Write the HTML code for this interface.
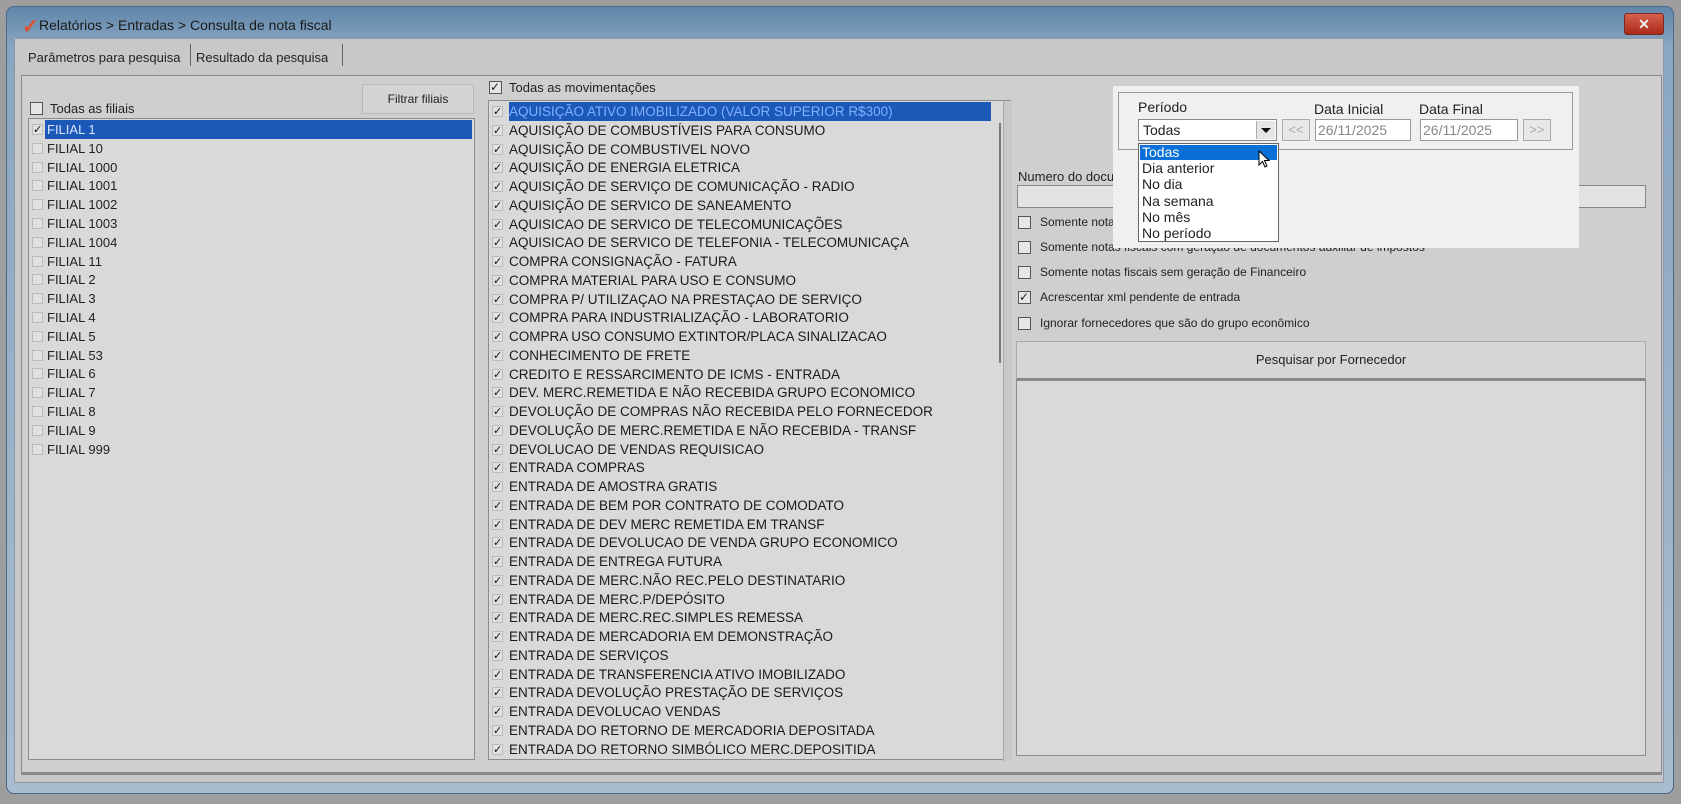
<!DOCTYPE html>
<html><head><meta charset="utf-8"><style>
*{box-sizing:border-box;margin:0;padding:0}
body{width:1681px;height:804px;background:#9e9e9e;position:relative;overflow:hidden;font-family:"Liberation Sans",sans-serif;color:#222}
.a{position:absolute}
.win{left:6px;top:6px;width:1668px;height:788px;background:linear-gradient(#5f86aa,#8aa6c2 40px,#a9bccf);border-radius:8px;border:1px solid #4a6a86}
.body{left:14px;top:38px;width:1650px;height:745px;background:#c8c8c8;border:1px solid #8a9aa8}
.t{font-size:13px;white-space:nowrap}
.cb{width:13px;height:13px;border:1px solid #555;background:#e6e6e6}
.list{background:#d9d9d9;border:1px solid #8c8c8c}
.row{position:absolute;left:0;height:19px;font-size:13px;line-height:19px;white-space:nowrap}
.ck{position:absolute;left:3px;top:4px;width:11px;height:11px;font-size:11px;line-height:10px;color:#111;border:1px solid #bbb;background:#e0e0e0;text-align:center}
</style></head><body>
<div class="a win"></div>
<div class="a" style="left:22px;top:14px;font-size:20px;color:#e0502a;font-weight:bold">✓</div>
<div class="a t" style="left:39px;top:17px;font-size:14px;color:#1a1a1a">Relatórios &gt; Entradas &gt; Consulta de nota fiscal</div>
<div class="a" style="left:1624px;top:13px;width:40px;height:22px;background:linear-gradient(#d8604e,#a92a1a);border:1px solid #7a2a20;border-radius:3px;color:#eee;text-align:center;font-size:14px;line-height:20px;font-weight:bold">✕</div>
<div class="a body"></div>
<div class="a t" style="left:28px;top:50px">Parâmetros para pesquisa</div>
<div class="a" style="left:190px;top:44px;width:1px;height:22px;background:#666"></div>
<div class="a t" style="left:196px;top:50px">Resultado da pesquisa</div>
<div class="a" style="left:342px;top:44px;width:1px;height:22px;background:#666"></div>
<div class="a" style="left:21px;top:75px;width:1641px;height:700px;background:#cfcfcf;border:1px solid #8a8a8a;border-bottom:3px solid #888"></div>

<div class="a" style="left:362px;top:84px;width:112px;height:30px;background:#d4d4d4;border:1px solid #bbb;font-size:12px;text-align:center;line-height:28px">Filtrar filiais</div>
<div class="a cb" style="left:30px;top:102px"></div>
<div class="a t" style="left:50px;top:101px">Todas as filiais</div>
<div class="a list" style="left:28px;top:118px;width:447px;height:642px">
<div class="a" style="left:16px;top:1px;width:427px;height:19px;background:#1c58b8"></div>
<div id="fl"></div>
</div>

<div class="a cb" style="left:489px;top:81px"><span style="position:absolute;left:0;top:-2px;font-size:12px">✓</span></div>
<div class="a t" style="left:509px;top:80px">Todas as movimentações</div>
<div class="a list" style="left:488px;top:100px;width:523px;height:660px;border-right:none">
<div class="a" style="left:20px;top:1px;width:482px;height:19px;background:#1c58b8"></div>
<div class="a" style="left:510px;top:22px;width:2px;height:240px;background:#777"></div>
<div class="a" style="left:514px;top:0;width:9px;height:660px;background:#c8c8c8;border-left:1px solid #aaa"></div>
<div id="ml"></div>
</div>

<div class="a t" style="left:1018px;top:169px">Numero do documento</div>
<div class="a" style="left:1017px;top:185px;width:629px;height:23px;background:#e2e2e2;border:1px solid #888"></div>
<div id="cbs"></div>
<div class="a" style="left:1016px;top:341px;width:630px;height:39px;background:#d6d6d6;border:1px solid #aaa;border-bottom:2px solid #888;font-size:13px;text-align:center;line-height:36px">Pesquisar por Fornecedor</div>
<div class="a" style="left:1016px;top:380px;width:630px;height:376px;background:#d9d9d9;border:1px solid #8c8c8c"></div>

<div class="a" style="left:1113px;top:86px;width:466px;height:162px;background:#f0f0f0"></div>
<div class="a" style="left:1118px;top:92px;width:455px;height:58px;border:1px solid #999"></div>
<div class="a t" style="left:1138px;top:99px;font-size:14px">Período</div>
<div class="a" style="left:1138px;top:119px;width:139px;height:22px;background:#fff;border:1px solid #888"></div>
<div class="a t" style="left:1143px;top:122px;font-size:14px">Todas</div>
<div class="a" style="left:1256px;top:121px;width:19px;height:18px;background:#e6e6e6;border-left:1px solid #aaa"></div>
<div class="a" style="left:1261px;top:128px;width:0;height:0;border-left:5px solid transparent;border-right:5px solid transparent;border-top:5px solid #111"></div>
<div class="a" style="left:1282px;top:119px;width:28px;height:22px;background:#e8e8e8;border:1px solid #aaa;color:#aaa;font-size:13px;text-align:center;line-height:20px">&lt;&lt;</div>
<div class="a t" style="left:1314px;top:101px;font-size:14px">Data Inicial</div>
<div class="a" style="left:1315px;top:119px;width:96px;height:22px;background:#fff;border:1px solid #999;color:#888;font-size:14px;padding:2px 2px">26/11/2025</div>
<div class="a t" style="left:1419px;top:101px;font-size:14px">Data Final</div>
<div class="a" style="left:1420px;top:119px;width:98px;height:22px;background:#fff;border:1px solid #999;color:#888;font-size:14px;padding:2px 2px">26/11/2025</div>
<div class="a" style="left:1523px;top:119px;width:28px;height:22px;background:#e8e8e8;border:1px solid #aaa;color:#aaa;font-size:13px;text-align:center;line-height:20px">&gt;&gt;</div>
<div class="a" style="left:1138px;top:143px;width:141px;height:99px;background:#fff;border:1px solid #666"></div>
<div class="a" style="left:1140px;top:145px;width:137px;height:15px;background:#0a6fd6"></div>
<div id="dd"></div>
<svg class="a" style="left:1258px;top:150px" width="14" height="20" viewBox="0 0 14 20"><path d="M1 1 L1 15 L4.5 11.5 L7 17 L9 16 L6.5 10.5 L11 10.5 Z" fill="#fff" stroke="#000" stroke-width="1"/></svg>

<script>
var f=["FILIAL 1","FILIAL 10","FILIAL 1000","FILIAL 1001","FILIAL 1002","FILIAL 1003","FILIAL 1004","FILIAL 11","FILIAL 2","FILIAL 3","FILIAL 4","FILIAL 5","FILIAL 53","FILIAL 6","FILIAL 7","FILIAL 8","FILIAL 9","FILIAL 999"];
var h="";f.forEach(function(s,i){var t=1+i*18.8;h+='<div class="row" style="top:'+t+'px;left:0;width:440px"><span class="ck">'+(i==0?'✓':'')+'</span><span style="position:absolute;left:18px;'+(i==0?'color:#d8e4ff':'')+'">'+s+'</span></div>'});
document.getElementById('fl').innerHTML=h;
var m=["AQUISIÇÃO ATIVO IMOBILIZADO (VALOR SUPERIOR R$300)","AQUISIÇÃO DE COMBUSTÍVEIS PARA CONSUMO","AQUISIÇÃO DE COMBUSTIVEL NOVO","AQUISIÇÃO DE ENERGIA ELETRICA","AQUISIÇÃO DE SERVIÇO DE COMUNICAÇÃO - RADIO","AQUISIÇÃO DE SERVICO DE SANEAMENTO","AQUISICAO DE SERVICO DE TELECOMUNICAÇÕES","AQUISICAO DE SERVICO DE TELEFONIA - TELECOMUNICAÇA","COMPRA CONSIGNAÇÃO - FATURA","COMPRA MATERIAL PARA USO E CONSUMO","COMPRA P/ UTILIZAÇAO NA PRESTAÇAO DE SERVIÇO","COMPRA PARA INDUSTRIALIZAÇÃO - LABORATORIO","COMPRA USO CONSUMO EXTINTOR/PLACA SINALIZACAO","CONHECIMENTO DE FRETE","CREDITO E RESSARCIMENTO DE ICMS - ENTRADA","DEV. MERC.REMETIDA E NÃO RECEBIDA GRUPO ECONOMICO","DEVOLUÇÃO DE COMPRAS NÃO RECEBIDA PELO FORNECEDOR","DEVOLUÇÃO DE MERC.REMETIDA E NÃO RECEBIDA - TRANSF","DEVOLUCAO DE VENDAS REQUISICAO","ENTRADA COMPRAS","ENTRADA DE AMOSTRA GRATIS","ENTRADA DE BEM POR CONTRATO DE COMODATO","ENTRADA DE DEV MERC REMETIDA EM TRANSF","ENTRADA DE DEVOLUCAO DE VENDA GRUPO ECONOMICO","ENTRADA DE ENTREGA FUTURA","ENTRADA DE MERC.NÃO REC.PELO DESTINATARIO","ENTRADA DE MERC.P/DEPÓSITO","ENTRADA DE MERC.REC.SIMPLES REMESSA","ENTRADA DE MERCADORIA EM DEMONSTRAÇÃO","ENTRADA DE SERVIÇOS","ENTRADA DE TRANSFERENCIA ATIVO IMOBILIZADO","ENTRADA DEVOLUÇÃO PRESTAÇÃO DE SERVIÇOS","ENTRADA DEVOLUCAO VENDAS","ENTRADA DO RETORNO DE MERCADORIA DEPOSITADA","ENTRADA DO RETORNO SIMBÓLICO MERC.DEPOSITIDA"];
h="";m.forEach(function(s,i){var t=1+i*18.75;h+='<div class="row" style="top:'+t+'px"><span class="ck">✓</span><span style="position:absolute;left:20px;font-size:13.5px;color:'+(i==0?'#7fb0ff':'#1a1a1a')+'">'+s+'</span></div>'});
document.getElementById('ml').innerHTML=h;
var c=["Somente notas fiscais canceladas (Status 3)","Somente notas fiscais com geração de documentos auxiliar de impostos","Somente notas fiscais sem geração de Financeiro","Acrescentar xml pendente de entrada","Ignorar fornecedores que são do grupo econômico"],ys=[223,248,273,298,324];
h="";c.forEach(function(s,i){h+='<div class="a cb" style="left:1018px;top:'+(ys[i]-7)+'px">'+(i==3?'<span style="position:absolute;left:0;top:-2px;font-size:12px">✓</span>':'')+'</div><div class="a t" style="left:1040px;top:'+(ys[i]-8)+'px;font-size:12px">'+s+'</div>'});
document.getElementById('cbs').innerHTML=h;
var d=["Todas","Dia anterior","No dia","Na semana","No mês","No período"];
h="";d.forEach(function(s,i){h+='<div class="a t" style="left:1142px;top:'+(144+i*16.2)+'px;font-size:14px;line-height:16px;'+(i==0?'color:#fff':'')+'">'+s+'</div>'});
document.getElementById('dd').innerHTML=h;
</script>
</body></html>
